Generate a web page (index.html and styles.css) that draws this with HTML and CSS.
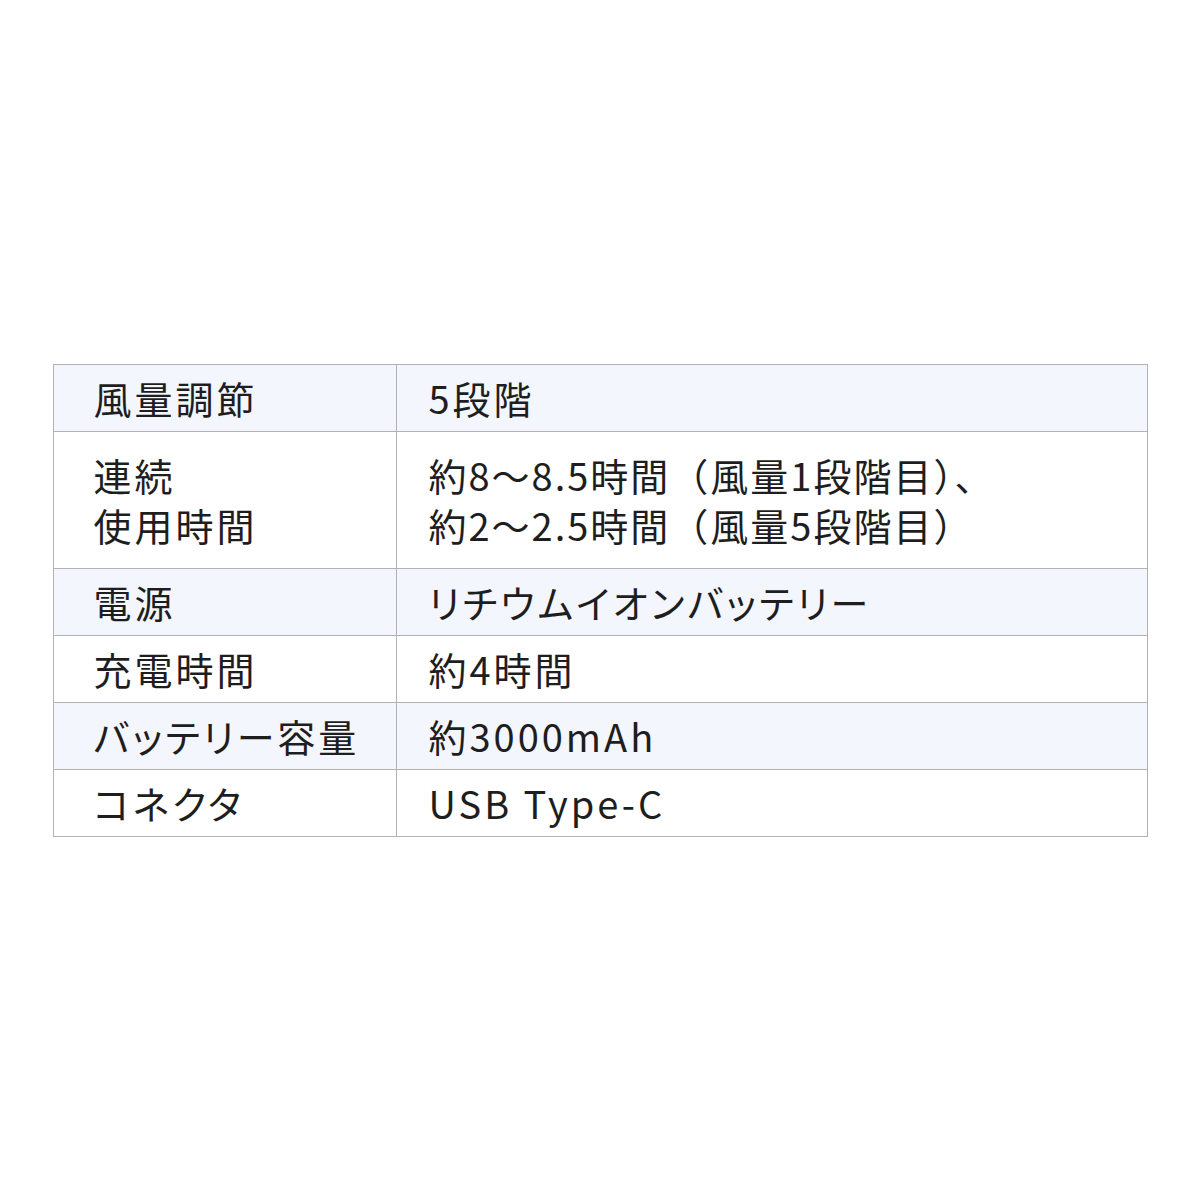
FILE: index.html
```html
<!DOCTYPE html>
<html lang="ja">
<head>
<meta charset="utf-8">
<link rel="stylesheet" href="styles.css">
</head>
<body>
<main class="page">
  <table class="spec">
    <tbody>
      <tr class="row shaded">
        <th class="label">風量調節</th>
        <td class="value">5段階</td>
      </tr>
      <tr class="row tall">
        <th class="label">連続<br>使用時間</th>
        <td class="value full">約8〜8.5時間（風量1段階目）、<br>約2〜2.5時間（風量5段階目）</td>
      </tr>
      <tr class="row shaded">
        <th class="label">電源</th>
        <td class="value">リチウムイオンバッテリー</td>
      </tr>
      <tr class="row">
        <th class="label">充電時間</th>
        <td class="value">約4時間</td>
      </tr>
      <tr class="row shaded">
        <th class="label">バッテリー容量</th>
        <td class="value">約3000mAh</td>
      </tr>
      <tr class="row">
        <th class="label">コネクタ</th>
        <td class="value">USB Type-C</td>
      </tr>
    </tbody>
  </table>
</main>
</body>
</html>
```

FILE: styles.css
```css
html, body {
  margin: 0;
  padding: 0;
  background: #ffffff;
}

.page {
  width: 1200px;
  height: 1200px;
  display: flex;
  align-items: center;
  justify-content: center;
  font-family: "Noto Sans CJK JP", "Noto Sans", sans-serif;
  color: #1e1e1e;
}

.spec {
  width: 1095px;
  border-collapse: collapse;
  border: 1px solid #b2b2b6;
  table-layout: fixed;
}

.row {
  height: 67px;
}

.tall {
  height: 137px;
}

.shaded {
  background: #f3f6fc;
}

.label,
.value {
  border: 1px solid #b2b2b6;
  font-size: 38px;
  font-weight: 400;
  letter-spacing: 3px;
  line-height: 50px;
  text-align: left;
  vertical-align: middle;
  padding: 0;
  font-feature-settings: "palt";
}

.full {
  font-feature-settings: normal;
  letter-spacing: 2px;
}

.label {
  width: 302px;
  padding-left: 40px;
}

.value {
  padding-left: 32px;
}
```
